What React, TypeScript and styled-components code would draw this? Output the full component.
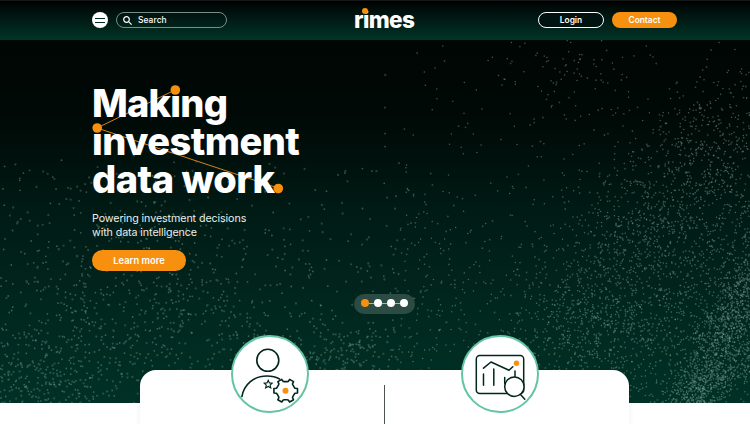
import React from "react";
import styled, { createGlobalStyle } from "styled-components";

const ORANGE = "#f7900f";
const INK = "#00261d";

const GlobalStyle = createGlobalStyle`
  * { box-sizing: border-box; }
  body {
    margin: 0;
    background: #fff;
    font-family: Inter, "Open Sans", sans-serif;
    overflow: hidden;
  }
`;

const Page = styled.div`
  height: 424px;
  overflow: hidden;
`;

const Header = styled.header`
  height: 40px;
  padding: 0 73px 0 92px;
  display: grid;
  grid-template-columns: 1fr auto 1fr;
  align-items: center;
  background: linear-gradient(#000 0, #000f0b 25%, #003427 100%);
  box-shadow: inset 0 1px #151716;
`;

const HeaderSide = styled.div<{ $end?: boolean }>`
  display: flex;
  align-items: center;
  gap: 8px;
  justify-content: ${(p) => (p.$end ? "flex-end" : "flex-start")};
`;

const MenuButton = styled.button`
  width: 16px;
  height: 16px;
  padding: 0;
  border: 0;
  border-radius: 50%;
  background: #fff;
  display: flex;
  flex-direction: column;
  align-items: center;
  justify-content: center;
  gap: 3px;
`;

const MenuBar = styled.span`
  width: 10px;
  height: 1px;
  background: #00261d;
`;

const SearchBox = styled.label`
  width: 111px;
  height: 16px;
  border: 1px solid #7b8b86;
  border-radius: 8px;
  display: flex;
  align-items: center;
  gap: 6px;
  padding-left: 6px;
  color: #fff;
  font-size: 8.4px;
  font-weight: 500;
  letter-spacing: 0.1px;
`;

const Logo = styled.div`
  position: relative;
  width: 61px;
  height: 24px;
  color: #fff;
  font-size: 22.6px;
  font-weight: 800;
  line-height: 24px;
  letter-spacing: -0.6px;
  white-space: nowrap;
`;

const LogoDot = styled.i`
  position: absolute;
  left: 8px;
  top: -0.5px;
  width: 6px;
  height: 6px;
  border-radius: 50%;
  background: ${ORANGE};
`;

const Pill = styled.button<{ $filled?: boolean }>`
  width: ${(p) => (p.$filled ? 65 : 66)}px;
  height: 16px;
  padding: 0;
  border: ${(p) => (p.$filled ? "0" : "1px solid #fff")};
  border-radius: 8px;
  background: ${(p) => (p.$filled ? ORANGE : "#00130e")};
  color: #fff;
  font: 600 8.4px/14px Inter, sans-serif;
`;

const Hero = styled.section`
  position: relative;
  height: 363px;
  padding: 45px 73px 0 92px;
  background: linear-gradient(#000604 0, #000906 20%, #001b15 48%, #002a21 80%, #003126 100%);
`;

const Particles = styled.svg`
  position: absolute;
  inset: 0;
`;

const HeroBody = styled.div`
  position: relative;
  color: #fff;
  display: flex;
  flex-direction: column;
  align-items: flex-start;
`;

const Title = styled.h1`
  position: relative;
  margin: -1px 0 0;
  font-size: 38px;
  font-weight: 800;
  line-height: 38px;
`;

const TitleLine = styled.span<{ $tracking: number }>`
  display: block;
  position: relative;
  white-space: nowrap;
  letter-spacing: ${(p) => p.$tracking}px;
`;

const Stop = styled.span`
  color: transparent;
`;

const Constellation = styled.svg`
  position: absolute;
  left: -2px;
  top: -4px;
`;

const Lead = styled.p`
  margin: 14px 0 0;
  font-size: 10.7px;
  line-height: 14px;
  letter-spacing: -0.09px;
  color: #e9efed;
`;

const LearnMore = styled.button`
  width: 94px;
  height: 21px;
  margin-top: 10px;
  padding: 0;
  border: 0;
  border-radius: 11px;
  background: ${ORANGE};
  color: #fff;
  font: 600 9.4px/21px Inter, sans-serif;
`;

const Pager = styled.nav`
  position: relative;
  align-self: center;
  margin-top: 23px;
  width: 61px;
  height: 20px;
  border-radius: 10px;
  background: #2c4b43;
  display: flex;
  align-items: center;
  justify-content: center;
`;

const PagerDot = styled.span<{ $active?: boolean }>`
  width: 8px;
  height: 8px;
  margin-bottom: 2px;
  border-radius: 50%;
  background: ${(p) => (p.$active ? ORANGE : "#fff")};
`;

const PagerLink = styled.span`
  width: 5px;
  height: 1px;
  margin-bottom: 1px;
  background: #a5b5b0;
`;

const Card = styled.section`
  position: relative;
  width: 489px;
  height: 90px;
  margin: -33px 0 0 140px;
  border-radius: 16px;
  background: #fff;
  box-shadow: 0 3px 6px rgba(0, 0, 0, 0.07);
  display: grid;
  grid-template-columns: 244px 1px 244px;
`;

const CardCell = styled.div<{ $shift: number }>`
  padding-left: ${(p) => p.$shift}px;
`;

const Divider = styled.div`
  margin-top: 15px;
  background: #4d5351;
`;

const Badge = styled.div`
  width: 78px;
  height: 78px;
  margin-top: -35px;
  border: 2px solid #65c3a6;
  border-radius: 50%;
  background: #fff;
  overflow: hidden;
`;

const BadgeArt = styled.svg`
  display: block;
  margin: -2px;
`;

type Cloud = { x: number; y: number; sx: number; sy: number; tilt: number; n: number };

const clouds: Cloud[] = [
  { x: 40, y: 345, sx: 38, sy: 26, tilt: 0, n: 330 },
  { x: 70, y: 290, sx: 90, sy: 55, tilt: 0, n: 400 },
  { x: 190, y: 265, sx: 70, sy: 45, tilt: 0.4, n: 360 },
  { x: 345, y: 322, sx: 32, sy: 20, tilt: 0, n: 210 },
  { x: 130, y: 190, sx: 110, sy: 40, tilt: 0.1, n: 150 },
  { x: 430, y: 250, sx: 60, sy: 45, tilt: -0.4, n: 200 },
  { x: 560, y: 30, sx: 35, sy: 30, tilt: 0.5, n: 80 },
  { x: 700, y: 115, sx: 50, sy: 28, tilt: -0.7, n: 400 },
  { x: 640, y: 195, sx: 55, sy: 28, tilt: -0.5, n: 400 },
  { x: 590, y: 290, sx: 50, sy: 35, tilt: -0.3, n: 650 },
  { x: 670, y: 260, sx: 65, sy: 65, tilt: 0, n: 850 },
  { x: 728, y: 285, sx: 65, sy: 13, tilt: -1.15, n: 1200 },
  { x: 700, y: 350, sx: 45, sy: 13, tilt: -0.6, n: 600 },
  { x: 735, y: 180, sx: 30, sy: 80, tilt: 0, n: 350 },
];

function buildParticles() {
  let seed = 9241;
  const rand = () => {
    seed = (seed * 1664525 + 1013904223) % 4294967296;
    return seed / 4294967296;
  };
  const layers = ["", "", "", ""];
  const put = (x: number, y: number) => {
    if (x < 0 || x > 750 || y < 0 || y > 363) return;
    const side = x < 400 ? 0 : 2;
    layers[side + Math.floor(rand() * 2)] += `M${x.toFixed(1)} ${y.toFixed(1)}h0`;
  };
  clouds.forEach((c) => {
    for (let i = 0; i < c.n; i++) {
      const r = Math.sqrt(-2 * Math.log(rand() + 1e-6));
      const a = rand() * Math.PI * 2;
      const u = r * Math.cos(a) * c.sx;
      const v = r * Math.sin(a) * c.sy;
      put(
        c.x + u * Math.cos(c.tilt) - v * Math.sin(c.tilt),
        c.y + u * Math.sin(c.tilt) + v * Math.cos(c.tilt)
      );
    }
  });
  for (let i = 0; i < 330; i++) put(380 + rand() * 370, rand() * 363);
  for (let i = 0; i < 260; i++) put(rand() * 450, 120 + rand() * 243);
  return layers;
}

const particleLayers = buildParticles();

function gearPath(cx: number, cy: number, inner: number, outer: number, teeth: number) {
  const pts: string[] = [];
  const step = (Math.PI * 2) / teeth;
  for (let i = 0; i < teeth; i++) {
    const a = i * step;
    [
      [-0.37, inner],
      [-0.25, inner + 0.4],
      [-0.18, outer],
      [0.18, outer],
      [0.25, inner + 0.4],
      [0.37, inner],
    ].forEach(([o, r]) => {
      const t = a + o * step;
      pts.push(`${(cx + Math.cos(t) * r).toFixed(2)} ${(cy + Math.sin(t) * r).toFixed(2)}`);
    });
  }
  return `M${pts.join("L")}Z`;
}

export default function App() {
  return (
    <Page>
      <GlobalStyle />
      <Header>
        <HeaderSide>
          <MenuButton aria-label="Menu">
            <MenuBar />
            <MenuBar />
          </MenuButton>
          <SearchBox>
            <svg width="9" height="9" viewBox="0 0 9 9" fill="none" stroke="#fff" strokeWidth="1.2">
              <circle cx="3.5" cy="3.5" r="2.8" />
              <path d="M5.6 5.6 8.6 8.6" />
            </svg>
            Search
          </SearchBox>
        </HeaderSide>
        <Logo>
          rimes
          <LogoDot />
        </Logo>
        <HeaderSide $end>
          <Pill>Login</Pill>
          <Pill $filled>Contact</Pill>
        </HeaderSide>
      </Header>

      <Hero>
        <Particles width="750" height="363" viewBox="0 0 750 363" fill="none" stroke="#a6c6bb" strokeLinecap="round">
          <path d={particleLayers[0]} strokeWidth="1.8" strokeOpacity=".36" />
          <path d={particleLayers[1]} strokeWidth="2.3" strokeOpacity=".24" />
          <path d={particleLayers[2]} strokeWidth="1.5" strokeOpacity=".42" />
          <path d={particleLayers[3]} strokeWidth="1.8" strokeOpacity=".3" />
        </Particles>
        <HeroBody>
          <Title>
            <Constellation width="200" height="112" viewBox="90 80 200 112" fill="none" stroke="#d98214" strokeWidth="1">
              <path d="M175 90 97 128 278 188" />
            </Constellation>
            <TitleLine $tracking={-0.8}>Making</TitleLine>
            <TitleLine $tracking={-0.55}>investment</TitleLine>
            <TitleLine $tracking={-0.5}>
              data work<Stop>.</Stop>
            </TitleLine>
            <Constellation width="200" height="120" viewBox="90 80 200 120" fill={ORANGE}>
              <circle cx="175.3" cy="90" r="4.8" />
              <circle cx="97.2" cy="128" r="4.8" />
              <circle cx="278.3" cy="188.5" r="4.8" />
            </Constellation>
          </Title>
          <Lead>
            Powering investment decisions
            <br />
            with data intelligence
          </Lead>
          <LearnMore>Learn more</LearnMore>
          <Pager>
            <PagerDot $active />
            <PagerLink />
            <PagerDot />
            <PagerLink />
            <PagerDot />
            <PagerLink />
            <PagerDot />
          </Pager>
        </HeroBody>
      </Hero>

      <Card>
        <CardCell $shift={91}>
          <Badge>
            <BadgeArt width="78" height="78" viewBox="231 335 78 78" fill="none" stroke={INK} strokeWidth="1.6">
              <circle cx="267.8" cy="360.3" r="11" />
              <path d="M241.8 397C244 384 254 376 267 376c5 0 9 1 13 3.2" />
              <path
                d="m268.2 380.3 1.2 2.6 2.8.3-2.1 1.9.7 2.9-2.6-1.5-2.6 1.5.7-2.9-2.1-1.9 2.8-.3Z"
                strokeWidth="1.1"
              />
              <path d={gearPath(285.7, 390.7, 9.2, 12, 6)} fill="#fff" strokeLinejoin="round" />
              <circle cx="285.5" cy="390.7" r="3" fill={ORANGE} stroke="none" />
            </BadgeArt>
          </Badge>
        </CardCell>
        <Divider />
        <CardCell $shift={76}>
          <Badge>
            <BadgeArt
              width="78"
              height="78"
              viewBox="461 335 78 78"
              fill="none"
              stroke={INK}
              strokeWidth="1.5"
              strokeLinecap="round"
              strokeLinejoin="round"
            >
              <rect x="476.3" y="355.5" width="47.4" height="38" rx="3.5" />
              <path d="m483.5 368.2 7.5-6.2 18 8.2 3.8-3.5M483.5 374v11.2M493.8 369v16.2M504.7 377.5v6M515 371v6" />
              <circle cx="514.4" cy="386.7" r="9.7" fill="#fff" />
              <path d="m520.5 394.5 4.3 4.7" />
              <circle cx="516.5" cy="363.3" r="2.7" fill={ORANGE} stroke="none" />
            </BadgeArt>
          </Badge>
        </CardCell>
      </Card>
    </Page>
  );
}
